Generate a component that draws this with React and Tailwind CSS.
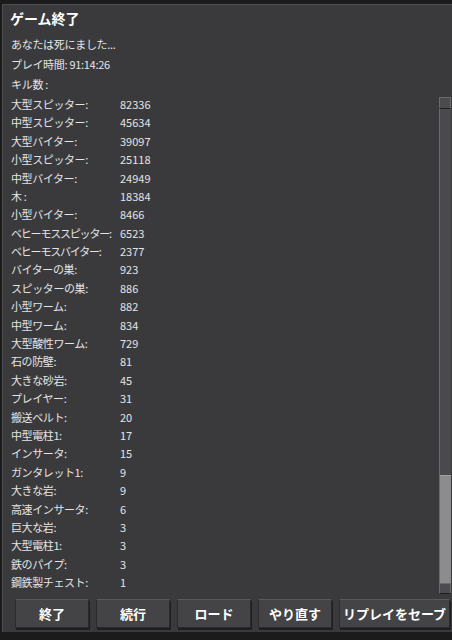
import React from "react";

const kills = [
  ["大型スピッター:", "82336"],
  ["中型スピッター:", "45634"],
  ["大型バイター:", "39097"],
  ["小型スピッター:", "25118"],
  ["中型バイター:", "24949"],
  ["木 :", "18384"],
  ["小型バイター:", "8466"],
  ["ベヒーモススピッター:", "6523"],
  ["ベヒーモスバイター:", "2377"],
  ["バイターの巣:", "923"],
  ["スピッターの巣:", "886"],
  ["小型ワーム:", "882"],
  ["中型ワーム:", "834"],
  ["大型酸性ワーム:", "729"],
  ["石の防壁:", "81"],
  ["大きな砂岩:", "45"],
  ["プレイヤー:", "31"],
  ["搬送ベルト:", "20"],
  ["中型電柱1:", "17"],
  ["インサータ:", "15"],
  ["ガンタレット1:", "9"],
  ["大きな岩:", "9"],
  ["高速インサータ:", "6"],
  ["巨大な岩:", "3"],
  ["大型電柱1:", "3"],
  ["鉄のパイプ:", "3"],
  ["鋼鉄製チェスト:", "1"],
];

const buttons = [
  ["終了", "w-[74px]"],
  ["続行", "w-[74px]"],
  ["ロード", "w-[74px]"],
  ["やり直す", "w-[74px]"],
  ["リプレイをセーブ", "w-[111px]"],
];

export default function App() {
  return (
    <div
      className="w-[452px] h-[640px] bg-[#1b1b1b] pt-[4px] pl-[2px] overflow-hidden"
      style={{ fontFamily: '"Noto Sans CJK JP", "Noto Sans", sans-serif' }}
    >
      <div className="w-[450px] h-[628px] bg-[#3a3a3d] border-t border-l border-[#4d4d50] flex flex-col">
        <div className="h-[26px] pl-[7px] pt-[2px] text-[14px] font-bold text-white leading-[22px]">
          ゲーム終了
        </div>
        <div className="pl-[8px] text-[11px] text-[#e4e4e4] tracking-[-0.3px]">
          <div className="h-[20px] leading-[20px] mt-[3px]">あなたは死にました...</div>
          <div className="h-[20px] leading-[20px]">プレイ時間: 91:14:26</div>
          <div className="h-[20px] leading-[20px]">キル数 :</div>
        </div>
        <div className="flex flex-1 min-h-0">
          <div className="flex-1 pl-[8px] pt-[1px] text-[11px] text-[#e4e4e4]">
            {kills.map(([k, v]) => (
              <div key={k} className="flex h-[18.4px] items-center">
                <div
                  className={`w-[109px] whitespace-nowrap ${
                    k.length > 9 ? "tracking-[-1.2px]" : "tracking-[-0.4px]"
                  }`}
                >
                  {k}
                </div>
                <div>{v}</div>
              </div>
            ))}
          </div>
          <div className="w-[12px] mr-[1px] mt-[3px] mb-[4px] flex flex-col bg-[#303033]">
            <div className="h-[12px] bg-[#4c4c50] border border-[#6a6a6e] border-b-[#1e1e1e]"></div>
            <div className="flex-1 flex flex-col bg-[#4a4a4e] border-l border-[#6b6b6f]">
              <div className="flex-1"></div>
              <div className="h-[108px] bg-[#8c8c8c] border-t border-[#a0a0a0]"></div>
            </div>
            <div className="h-[11px] bg-[#4c4c50] border border-[#6a6a6e] border-b-[#1e1e1e]"></div>
          </div>
        </div>
        <div className="flex gap-[7px] pl-[12px] pb-[4px] pt-[1px]">
          {buttons.map(([b, w]) => (
            <div
              key={b}
              className={`${w} h-[29px] bg-[#444447] border border-[#2a2a2c] border-t-[#5a5a5d] shadow-[1px_2px_0_#1e1e1e] flex items-center justify-center whitespace-nowrap text-[13px] font-bold text-white`}
            >
              {b}
            </div>
          ))}
        </div>
      </div>
    </div>
  );
}
